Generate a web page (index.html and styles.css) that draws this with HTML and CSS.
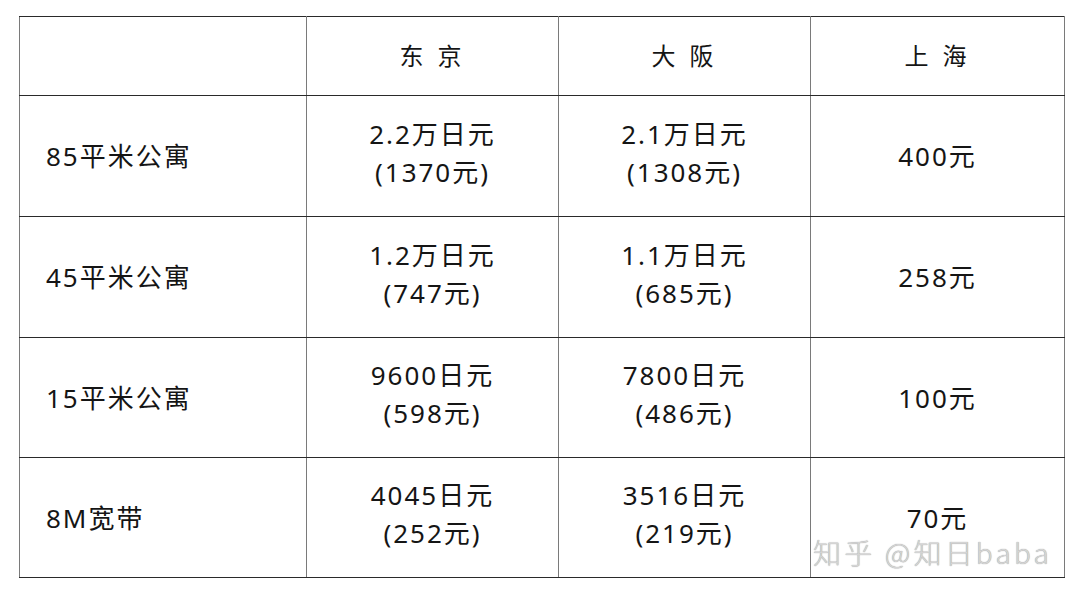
FILE: index.html
```html
<!DOCTYPE html>
<html lang="zh">
<head>
<meta charset="utf-8">
<link rel="stylesheet" href="styles.css">
</head>
<body>
<div class="page">
<table class="grid">
  <colgroup>
    <col class="c0"><col class="c1"><col class="c2"><col class="c3">
  </colgroup>
  <tr class="head">
    <td></td>
    <td class="city">东 京</td>
    <td class="city">大 阪</td>
    <td class="city">上 海</td>
  </tr>
  <tr class="r1">
    <td class="label">85平米公寓</td>
    <td class="two">2.2万日元<br>(1370元)</td>
    <td class="two">2.1万日元<br>(1308元)</td>
    <td>400元</td>
  </tr>
  <tr class="r1">
    <td class="label">45平米公寓</td>
    <td class="two">1.2万日元<br>(747元)</td>
    <td class="two">1.1万日元<br>(685元)</td>
    <td>258元</td>
  </tr>
  <tr class="r2">
    <td class="label">15平米公寓</td>
    <td class="two">9600日元<br>(598元)</td>
    <td class="two">7800日元<br>(486元)</td>
    <td>100元</td>
  </tr>
  <tr class="r2">
    <td class="label">8M宽带</td>
    <td class="two">4045日元<br>(252元)</td>
    <td class="two">3516日元<br>(219元)</td>
    <td>70元</td>
  </tr>
</table>
<div class="watermark">知乎 @知日baba</div>
</div>
</body>
</html>
```
FILE: styles.css
```css
html, body {
  margin: 0;
  padding: 0;
  background: #fff;
}
.page {
  position: relative;
  width: 1080px;
  height: 601px;
  padding: 16px 0 0 19px;
  box-sizing: border-box;
}
.grid {
  border-collapse: collapse;
  table-layout: fixed;
  width: 1045px;
  font-family: "Noto Sans", "Noto Sans CJK SC", sans-serif;
  font-size: 26px;
  color: #151515;
  letter-spacing: 2px;
}
.c0 { width: 287px; }
.c1 { width: 252px; }
.c2 { width: 252px; }
.c3 { width: 254px; }
.grid td {
  border-left: 1.5px solid #7a7a7a;
  border-right: 1.5px solid #7a7a7a;
  border-top: 1.5px solid #2a2a2a;
  border-bottom: 1.5px solid #2a2a2a;
  text-align: center;
  vertical-align: middle;
  line-height: 38px;
  padding: 0;
}
.grid td.two {
  padding-bottom: 7px;
}
.grid tr.head td {
  height: 78px;
}
.grid tr.r1 td { height: 120px; }
.grid tr.r2 td { height: 119px; }
.grid tr.r1 td.two { height: 113px; }
.grid tr.r2 td.two { height: 112px; }
.grid td.city {
  letter-spacing: 4px;
  font-size: 24px;
}
.grid td.label {
  text-align: left;
  padding-left: 26px;
}
.watermark {
  position: absolute;
  left: 813px;
  top: 532px;
  font-family: "Noto Sans CJK SC", sans-serif;
  font-size: 28px;
  font-weight: 300;
  color: #d4d4d4;
  letter-spacing: 3.2px;
  text-shadow: 0 0 1px #8a8a8a;
}
```
